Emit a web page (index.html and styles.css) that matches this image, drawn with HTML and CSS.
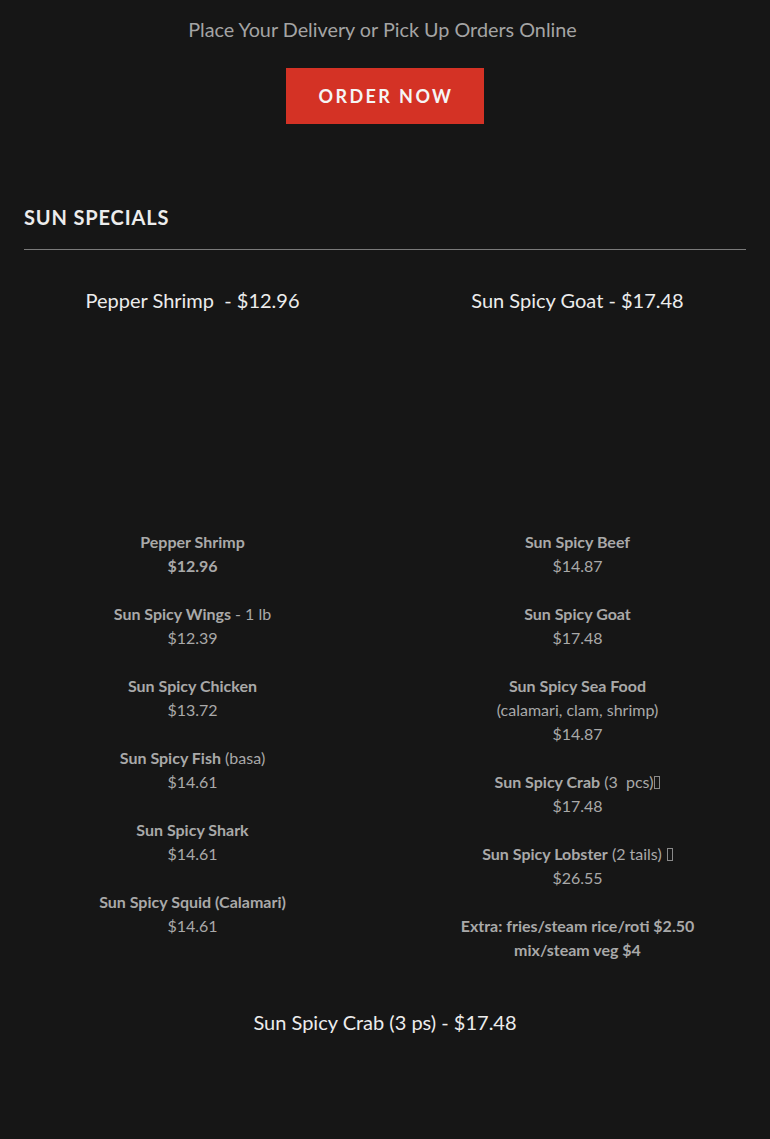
FILE: index.html
```html
<!DOCTYPE html>
<html>
<head>
<meta charset="utf-8">
<link rel="stylesheet" href="styles.css">
</head>
<body>
<section class="hero">
  <p class="tagline">Place Your Delivery or Pick Up Orders Online&nbsp;</p>
  <a class="order-btn" href="#">ORDER NOW</a>
</section>
<section class="specials">
  <h2 class="section-title">SUN SPECIALS</h2>
  <hr class="rule">
  <div class="columns">
    <div class="col">
      <h3 class="col-title">Pepper Shrimp &nbsp;- $12.96</h3>
      <div class="media"></div>
      <div class="items">
        <p><b>Pepper Shrimp</b><br><b>$12.96</b></p>
        <p><b>Sun Spicy Wings</b> - 1 lb<br>$12.39</p>
        <p><b>Sun Spicy Chicken</b><br>$13.72</p>
        <p><b>Sun Spicy Fish</b> (basa)<br>$14.61</p>
        <p><b>Sun Spicy Shark</b><br>$14.61</p>
        <p><b>Sun Spicy Squid (Calamari)</b><br>$14.61</p>
      </div>
    </div>
    <div class="col">
      <h3 class="col-title">Sun Spicy Goat - $17.48</h3>
      <div class="media"></div>
      <div class="items">
        <p><b>Sun Spicy Beef</b><br>$14.87</p>
        <p><b>Sun Spicy Goat</b><br>$17.48</p>
        <p><b>Sun Spicy Sea Food</b><br>(calamari, clam, shrimp)<br>$14.87</p>
        <p><b>Sun Spicy Crab</b> (3 &nbsp;pcs)<span class="tofu"></span><br>$17.48</p>
        <p><b>Sun Spicy Lobster</b> (2 tails) <span class="tofu"></span><br>$26.55</p>
        <p><b>Extra: fries/steam rice/roti $2.50<br>mix/steam veg $4</b></p>
      </div>
    </div>
  </div>
  <h3 class="bottom-title">Sun Spicy Crab (3 ps) - $17.48</h3>
</section>
</body>
</html>
```

FILE: styles.css
```css
html, body {
  margin: 0;
  padding: 0;
  background: #161616;
}
body {
  font-family: Lato, "Open Sans", sans-serif;
  color: #a9a9a9;
  width: 770px;
  min-height: 1139px;
}
.hero {
  display: flex;
  flex-direction: column;
  align-items: center;
  padding-top: 16px;
}
.tagline {
  margin: 0;
  font-size: 19.8px;
  line-height: 26px;
  color: #a4a4a4;
}
.order-btn {
  margin-top: 26px;
  width: 198px;
  height: 56px;
  box-sizing: border-box;
  display: flex;
  align-items: center;
  justify-content: center;
  background: #d43225;
  color: #f5f5f5;
  text-decoration: none;
  font-size: 18px;
  font-weight: 700;
  letter-spacing: 2.4px;
  padding-left: 2px;
}
.specials {
  padding: 0 24px;
  margin-top: 81px;
}
.section-title {
  margin: 0;
  font-size: 20px;
  line-height: 24px;
  font-weight: 700;
  letter-spacing: 0.85px;
  color: #ececec;
}
.rule {
  margin: 20px 0 0;
  border: 0;
  height: 1px;
  background: #7a7a7a;
}
.columns {
  display: grid;
  grid-template-columns: 1fr 1fr;
  column-gap: 48px;
  margin-top: 37px;
}
.col {
  text-align: center;
}
.col-title {
  margin: 0;
  font-size: 20px;
  line-height: 26px;
  font-weight: 400;
  color: #ececec;
}
.media {
  height: 217px;
}
.items p {
  margin: 0 0 24px;
  font-size: 16px;
  line-height: 24px;
  color: #a9a9a9;
}
.items b {
  font-weight: 700;
}
.tofu {
  display: inline-block;
  width: 4px;
  height: 11px;
  border: 1px solid #8a8a8a;
  vertical-align: -1px;
  margin-left: 1px;
}
.bottom-title {
  margin: 23px 0 0;
  text-align: center;
  font-size: 20px;
  line-height: 26px;
  font-weight: 400;
  color: #ececec;
}
```
